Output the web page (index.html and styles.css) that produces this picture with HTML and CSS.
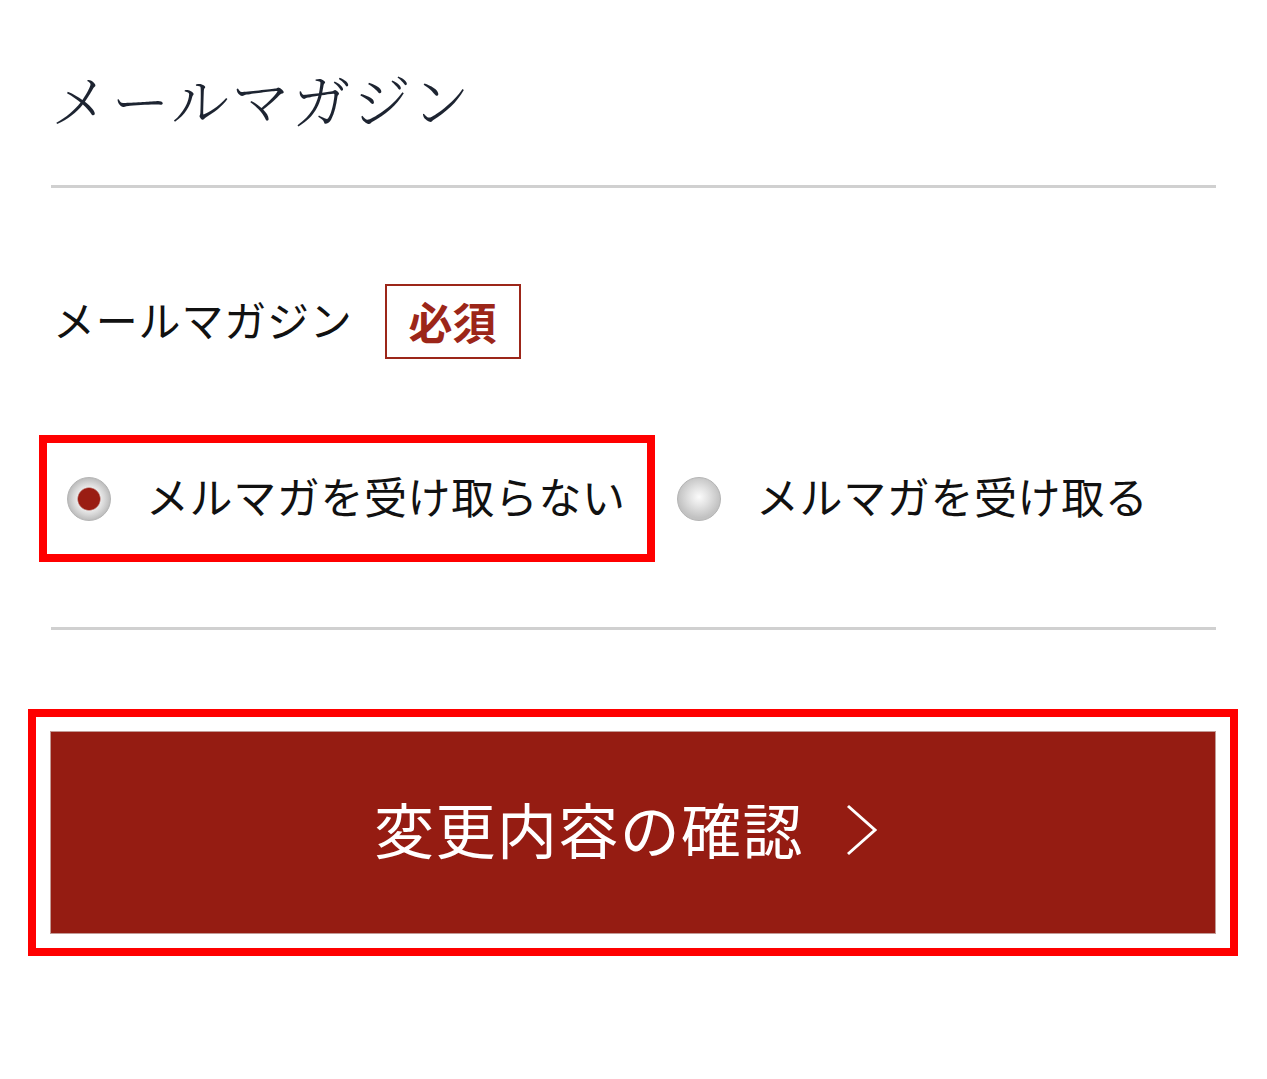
FILE: index.html
```html
<!DOCTYPE html>
<html lang="ja">
<head>
<meta charset="utf-8">
<title>メールマガジン</title>
<link rel="stylesheet" href="styles.css">
</head>
<body>
<div class="page">
  <h1 class="title">メールマガジン</h1>
  <hr class="rule">
  <div class="field-label">
    <span class="label-text">メールマガジン</span>
    <span class="badge">必須</span>
  </div>
  <div class="options">
    <label class="option option-marked">
      <span class="radio radio-on"></span>
      <span class="option-text">メルマガを受け取らない</span>
    </label>
    <label class="option">
      <span class="radio"></span>
      <span class="option-text">メルマガを受け取る</span>
    </label>
  </div>
  <hr class="rule rule-bottom">
  <button class="btn" type="button">
    <span class="btn-text">変更内容の確認</span>
    <svg class="chev" width="32" height="52" viewBox="0 0 32 52"><path d="M2 2 L29 26 L2 50" fill="none" stroke="#fff" stroke-width="3"/></svg>
  </button>
</div>
</body>
</html>
```
FILE: styles.css
```css
html, body {
  margin: 0;
  padding: 0;
  background: #fff;
}
body {
  font-family: "Noto Sans CJK JP", "Noto Sans", sans-serif;
  color: #111;
}
.page {
  width: 1165px;
  padding: 0 51px 120px;
}
.title {
  margin: 0;
  padding-top: 63px;
  font-family: "Noto Serif CJK JP", "Noto Sans CJK JP", serif;
  font-weight: 300;
  font-size: 58px;
  line-height: 70px;
  letter-spacing: 2.6px;
  color: #1d2431;
}
.rule {
  margin: 52px 0 0;
  height: 3px;
  border: none;
  background: #d0d0d0;
}
.field-label {
  display: flex;
  align-items: center;
  margin-top: 96px;
  padding-left: 2px;
}
.label-text {
  font-size: 42px;
  line-height: 1;
  letter-spacing: 0.8px;
  margin-top: -5px;
}
.badge {
  margin-left: 32px;
  border: 2px solid #9c2619;
  color: #9c2619;
  font-weight: 700;
  font-size: 44px;
  line-height: 1;
  padding: 13px 22px 14px;
}
.options {
  display: flex;
  align-items: center;
  margin-top: 84px;
}
.option {
  display: flex;
  align-items: center;
  height: 111px;
  box-sizing: border-box;
  padding-left: 30px;
}
.option-marked {
  width: 600px;
  margin-left: -4px;
  padding-left: 20px;
  outline: 8px solid #ff0000;
}
.radio {
  width: 44px;
  height: 44px;
  box-sizing: border-box;
  border-radius: 50%;
  border: 1px solid #b4b4b4;
  background: radial-gradient(circle at 50% 45%, #fbfbfb 0, #e4e4e4 9px, #c2c2c2 21px);
  flex: none;
}
.radio-on {
  background: radial-gradient(circle, #9a1d13 0, #9a1d13 10.5px, #e8e8e8 12px, #d6d6d6 16px, #bdbdbd 21px);
}
.option-text {
  margin-left: 35px;
  margin-top: -6px;
  font-size: 43px;
  line-height: 1;
  letter-spacing: 0.6px;
}
.rule-bottom {
  margin-top: 73px;
}
.btn {
  display: flex;
  align-items: center;
  justify-content: center;
  width: 1166px;
  height: 203px;
  margin: 101px 0 0 -1px;
  padding: 0 14px 0 0;
  background: #951c12;
  border: 1px solid #c39a95;
  outline: 8px solid #ff0000;
  outline-offset: 14px;
  color: #fff;
  font-family: "Noto Sans CJK JP", "Noto Sans", sans-serif;
  cursor: pointer;
}
.btn-text {
  font-size: 60px;
  line-height: 1;
  letter-spacing: 1.4px;
  font-weight: 400;
  margin-top: -9px;
}
.chev {
  margin-left: 42px;
  margin-top: -6px;
}
```
